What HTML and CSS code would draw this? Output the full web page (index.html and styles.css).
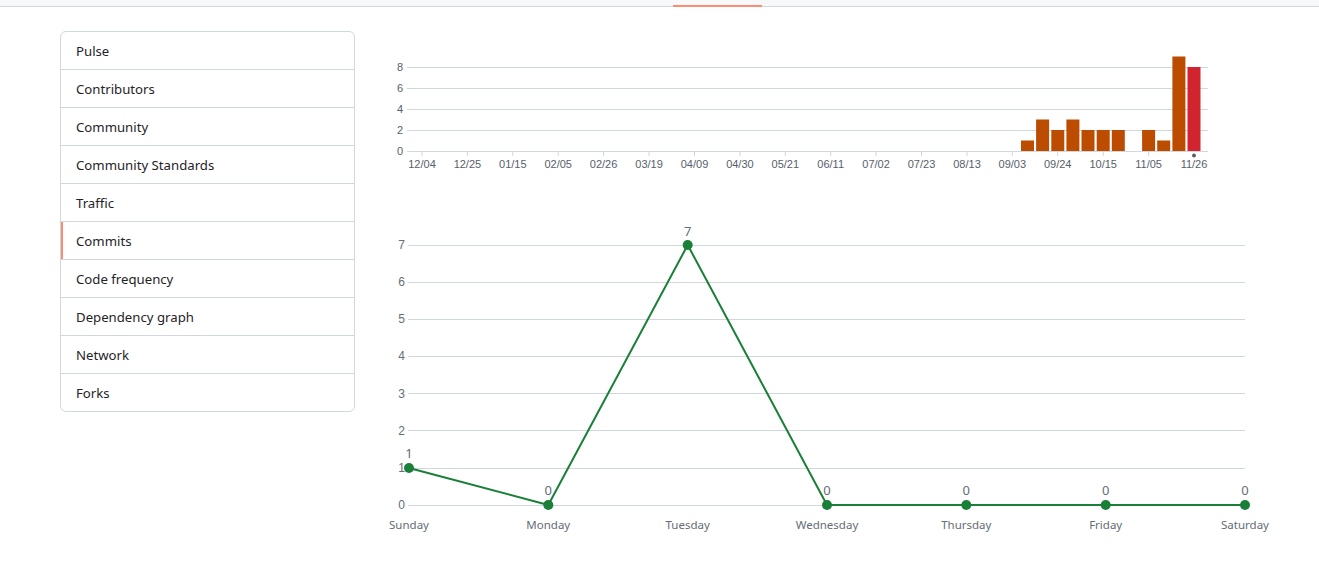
FILE: index.html
```html
<!DOCTYPE html>
<html>
<head>
<meta charset="utf-8">
<link rel="stylesheet" href="styles.css">
</head>
<body>
<header class="topbar">
  <div class="topbar-tab"></div>
</header>
<main class="layout">
  <nav class="sidenav">
    <a class="nav-item">Pulse</a>
    <a class="nav-item">Contributors</a>
    <a class="nav-item">Community</a>
    <a class="nav-item">Community Standards</a>
    <a class="nav-item">Traffic</a>
    <a class="nav-item active">Commits</a>
    <a class="nav-item">Code frequency</a>
    <a class="nav-item">Dependency graph</a>
    <a class="nav-item">Network</a>
    <a class="nav-item">Forks</a>
  </nav>
  <section class="charts">
    <svg class="bar-chart" width="900" height="150" viewBox="0 0 900 150">
      <g class="grid">
        <line x1="27" y1="36.5" x2="828" y2="36.5"/>
        <line x1="27" y1="57.5" x2="828" y2="57.5"/>
        <line x1="27" y1="78.5" x2="828" y2="78.5"/>
        <line x1="27" y1="99.5" x2="828" y2="99.5"/>
        <line x1="27" y1="120.5" x2="828" y2="120.5"/>
      </g>
      <g class="ylabels-small">
        <text x="23" y="36" dy="0.35em">8</text>
        <text x="23" y="57" dy="0.35em">6</text>
        <text x="23" y="78" dy="0.35em">4</text>
        <text x="23" y="99" dy="0.35em">2</text>
        <text x="23" y="120" dy="0.35em">0</text>
      </g>
      <g class="ticks">
        <line x1="42" y1="120" x2="42" y2="125"/>
        <line x1="87.4" y1="120" x2="87.4" y2="125"/>
        <line x1="132.8" y1="120" x2="132.8" y2="125"/>
        <line x1="178.2" y1="120" x2="178.2" y2="125"/>
        <line x1="223.6" y1="120" x2="223.6" y2="125"/>
        <line x1="269.1" y1="120" x2="269.1" y2="125"/>
        <line x1="314.5" y1="120" x2="314.5" y2="125"/>
        <line x1="359.9" y1="120" x2="359.9" y2="125"/>
        <line x1="405.3" y1="120" x2="405.3" y2="125"/>
        <line x1="450.7" y1="120" x2="450.7" y2="125"/>
        <line x1="496.1" y1="120" x2="496.1" y2="125"/>
        <line x1="541.5" y1="120" x2="541.5" y2="125"/>
        <line x1="587" y1="120" x2="587" y2="125"/>
        <line x1="632.3" y1="120" x2="632.3" y2="125"/>
        <line x1="677.7" y1="120" x2="677.7" y2="125"/>
        <line x1="723.2" y1="120" x2="723.2" y2="125"/>
        <line x1="768.6" y1="120" x2="768.6" y2="125"/>
      </g>
      <g class="bars">
        <rect x="641" y="109.5" width="13" height="10.5"/>
        <rect x="656.1" y="88.5" width="13" height="31.5"/>
        <rect x="671.3" y="99" width="13" height="21"/>
        <rect x="686.4" y="88.5" width="13" height="31.5"/>
        <rect x="701.5" y="99" width="13" height="21"/>
        <rect x="716.7" y="99" width="13" height="21"/>
        <rect x="731.8" y="99" width="13" height="21"/>
        <rect x="762.1" y="99" width="13" height="21"/>
        <rect x="777.2" y="109.5" width="13" height="10.5"/>
        <rect x="792.4" y="25.5" width="13" height="94.5"/>
        <rect class="bar-current" x="807.5" y="36" width="13" height="84"/>
      </g>
      <circle class="current-dot" cx="814" cy="124.5" r="2"/>
      <g class="xlabels-small">
        <text x="42" y="133" dy="0.35em">12/04</text>
        <text x="87.4" y="133" dy="0.35em">12/25</text>
        <text x="132.8" y="133" dy="0.35em">01/15</text>
        <text x="178.2" y="133" dy="0.35em">02/05</text>
        <text x="223.6" y="133" dy="0.35em">02/26</text>
        <text x="269.1" y="133" dy="0.35em">03/19</text>
        <text x="314.5" y="133" dy="0.35em">04/09</text>
        <text x="359.9" y="133" dy="0.35em">04/30</text>
        <text x="405.3" y="133" dy="0.35em">05/21</text>
        <text x="450.7" y="133" dy="0.35em">06/11</text>
        <text x="496.1" y="133" dy="0.35em">07/02</text>
        <text x="541.5" y="133" dy="0.35em">07/23</text>
        <text x="587" y="133" dy="0.35em">08/13</text>
        <text x="632.3" y="133" dy="0.35em">09/03</text>
        <text x="677.7" y="133" dy="0.35em">09/24</text>
        <text x="723.2" y="133" dy="0.35em">10/15</text>
        <text x="768.6" y="133" dy="0.35em">11/05</text>
        <text x="814" y="133" dy="0.35em">11/26</text>
      </g>
    </svg>
    <svg class="line-chart" width="900" height="364" viewBox="0 0 900 364">
      <g class="grid">
        <line x1="28" y1="64.5" x2="865" y2="64.5"/>
        <line x1="28" y1="101.5" x2="865" y2="101.5"/>
        <line x1="28" y1="138.5" x2="865" y2="138.5"/>
        <line x1="28" y1="175.5" x2="865" y2="175.5"/>
        <line x1="28" y1="212.5" x2="865" y2="212.5"/>
        <line x1="28" y1="249.5" x2="865" y2="249.5"/>
        <line x1="28" y1="287.5" x2="865" y2="287.5"/>
        <line x1="28" y1="324.5" x2="865" y2="324.5"/>
      </g>
      <g class="ylabels">
        <text x="25" y="64" dy="0.35em">7</text>
        <text x="25" y="101" dy="0.35em">6</text>
        <text x="25" y="138" dy="0.35em">5</text>
        <text x="25" y="175" dy="0.35em">4</text>
        <text x="25" y="212.5" dy="0.35em">3</text>
        <text x="25" y="249.5" dy="0.35em">2</text>
        <text x="25" y="287" dy="0.35em">1</text>
        <text x="25" y="324" dy="0.35em">0</text>
      </g>
      <polyline class="series" points="29,287 168.3,324 307.7,64 447,324 586.3,324 725.7,324 865,324"/>
      <g class="points">
        <circle cx="29" cy="287" r="5"/>
        <circle cx="168.3" cy="324" r="5"/>
        <circle cx="307.7" cy="64" r="5"/>
        <circle cx="447" cy="324" r="5"/>
        <circle cx="586.3" cy="324" r="5"/>
        <circle cx="725.7" cy="324" r="5"/>
        <circle cx="865" cy="324" r="5"/>
      </g>
      <g class="values">
        <text x="29" y="272" dy="0.35em">1</text>
        <text x="168.3" y="309" dy="0.35em">0</text>
        <text x="307.7" y="50" dy="0.35em">7</text>
        <text x="447" y="309" dy="0.35em">0</text>
        <text x="586.3" y="309" dy="0.35em">0</text>
        <text x="725.7" y="309" dy="0.35em">0</text>
        <text x="865" y="309" dy="0.35em">0</text>
      </g>
      <g class="days">
        <text x="29" y="344" dy="0.35em">Sunday</text>
        <text x="168.3" y="344" dy="0.35em">Monday</text>
        <text x="307.7" y="344" dy="0.35em">Tuesday</text>
        <text x="447" y="344" dy="0.35em">Wednesday</text>
        <text x="586.3" y="344" dy="0.35em">Thursday</text>
        <text x="725.7" y="344" dy="0.35em">Friday</text>
        <text x="865" y="344" dy="0.35em">Saturday</text>
      </g>
    </svg>
  </section>
</main>
</body>
</html>
```
FILE: styles.css
```css
* { box-sizing: border-box; }
html, body { margin: 0; padding: 0; background: #ffffff; }
body {
  font-family: "Noto Sans", "Liberation Sans", sans-serif;
  color: #1f2328;
}
.topbar {
  height: 7px;
  background: #f6f8fa;
  border-bottom: 1px solid #d0d7de;
  display: flex;
  align-items: flex-end;
}
.topbar-tab {
  margin-left: 673px;
  width: 89px;
  height: 2px;
  margin-bottom: -1px;
  background: #fd8c73;
}
.layout {
  display: flex;
  align-items: flex-start;
  padding: 24px 0 0 60px;
  gap: 25px;
}
.sidenav {
  width: 295px;
  flex: none;
  display: flex;
  flex-direction: column;
  border: 1px solid #d0d7de;
  border-radius: 6px;
  overflow: hidden;
}
.nav-item {
  position: relative;
  display: flex;
  align-items: center;
  height: 38px;
  padding: 0 15px;
  font-size: 13.2px;
  color: #1f2328;
  border-top: 1px solid #d0d7de;
}
.nav-item:first-child { border-top: 0; height: 37px; }
.nav-item.active::before {
  content: "";
  position: absolute;
  left: 0;
  top: 0;
  bottom: 0;
  width: 2px;
  background: #fd8c73;
}
.charts {
  display: flex;
  flex-direction: column;
  width: 900px;
  flex: none;
}
.charts svg { display: block; }
.grid line { stroke: #d0d7de; stroke-width: 1; }
.ticks line { stroke: #d0d7de; stroke-width: 1; }
.bars rect { fill: #bc4c00; }
.bars .bar-current { fill: #d1242f; }
.current-dot { fill: #57606a; }
.ylabels-small text {
  font-family: "Liberation Sans", Arial, sans-serif;
  font-size: 11px;
  fill: #57606a;
  text-anchor: end;
}
.xlabels-small text {
  font-family: "Liberation Sans", Arial, sans-serif;
  font-size: 11px;
  fill: #57606a;
  text-anchor: middle;
}
.ylabels text {
  font-family: "Liberation Sans", Arial, sans-serif;
  font-size: 12px;
  fill: #656d76;
  text-anchor: end;
}
.series { fill: none; stroke: #1a7f37; stroke-width: 2; stroke-linejoin: round; }
.points circle { fill: #1a7f37; }
.values text {
  font-family: "Noto Sans", sans-serif;
  font-size: 13px;
  fill: #656d76;
  text-anchor: middle;
}
.days text {
  font-family: "Noto Sans", sans-serif;
  font-size: 11.5px;
  fill: #656d76;
  text-anchor: middle;
}
```
